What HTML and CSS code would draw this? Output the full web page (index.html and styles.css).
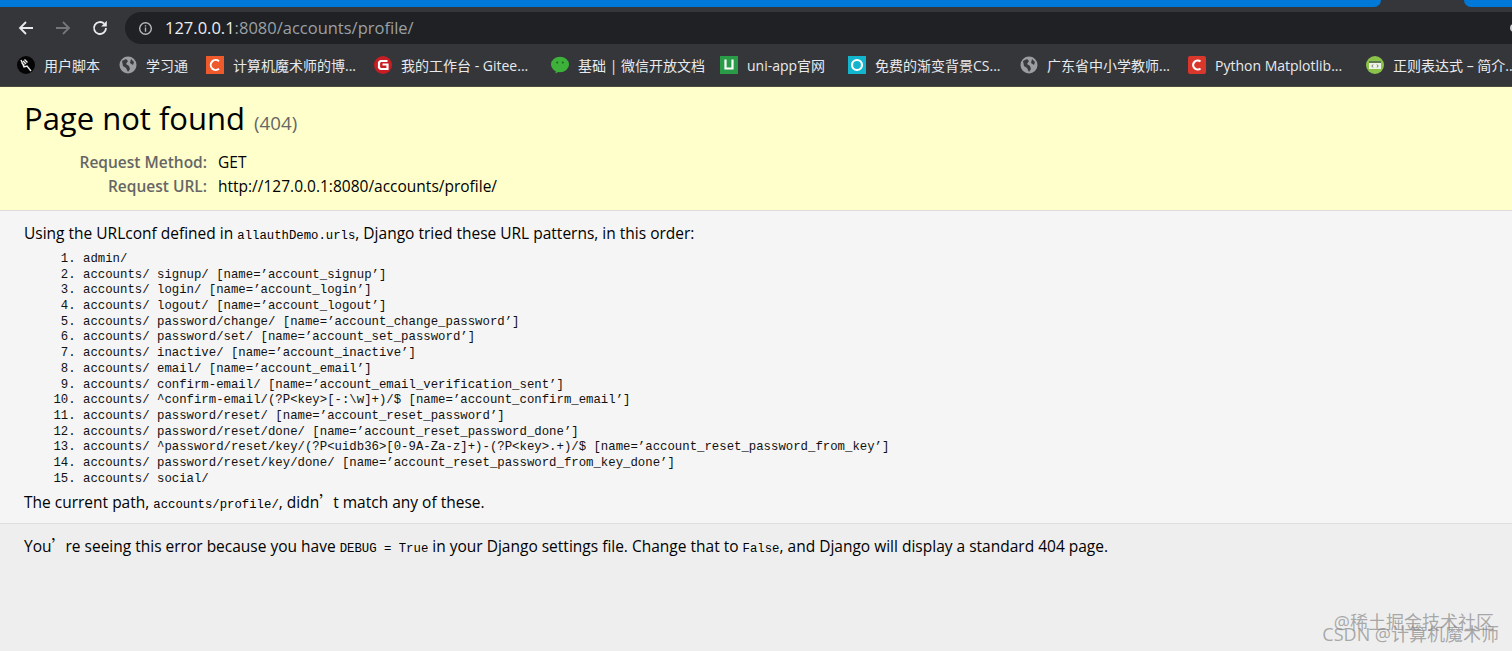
FILE: index.html
```html
<!DOCTYPE html>
<html>
<head>
  <meta charset="UTF-8">
  <title>Page not found at /accounts/profile/</title>
  <link rel="stylesheet" href="styles.css">
</head>
<body>
  <div class="tabstrip">
    <div class="tab-blue tab-left"></div>
    <div class="tab-blue tab-right"></div>
  </div>

  <div class="toolbar">
    <svg class="nav-icon" viewBox="0 0 18 18"><path d="M16 9H3M9 3L3 9l6 6" fill="none" stroke="#e8eaed" stroke-width="1.8"/></svg>
    <svg class="nav-icon" viewBox="0 0 18 18"><path d="M2 9h13M9 3l6 6-6 6" fill="none" stroke="#74767a" stroke-width="1.8"/></svg>
    <svg class="nav-icon" viewBox="0 0 18 18"><path d="M15 9a6 6 0 1 1-1.8-4.3" fill="none" stroke="#e8eaed" stroke-width="1.8"/><path d="M15.8 1.8v5.6h-5.6z" fill="#e8eaed"/></svg>
    <div class="omnibox">
      <svg class="info-icon" viewBox="0 0 16 16"><circle cx="8" cy="8" r="6.2" fill="none" stroke="#b5b7ba" stroke-width="1.5"/><path d="M8 7v4.4M8 4.4v1.5" stroke="#b5b7ba" stroke-width="1.5"/></svg>
      <span class="host">127.0.0.1</span><span class="path">:8080/accounts/profile/</span>
      <div class="omni-end"></div>
    </div>
  </div>

  <div class="bookmarks">
    <div class="bm bm-1">
      <svg class="fav" viewBox="0 0 18 18"><circle cx="9" cy="9" r="9" fill="#050505"/><path d="M4.500 6.500l3 3M6 5l3 3M7.500 3.500l3 3M4 4l3 7 3-1 4 5" stroke="#eee" stroke-width="1.400" fill="none"/></svg>
      <span>用户脚本</span>
    </div>
    <div class="bm bm-2">
      <svg class="fav" viewBox="0 0 18 18"><circle cx="9" cy="9" r="8.500" fill="#9b9da0"/><path d="M3 5l4-2 2 2-2 3 3 2 1 3-2 3-2-4-3-2zM12 3l3 3-1 3-3-2z" fill="#3a3b3f"/></svg>
      <span>学习通</span>
    </div>
    <div class="bm bm-3">
      <svg class="fav" viewBox="0 0 18 18"><rect width="18" height="18" fill="#ef5a2c"/><path d="M13 5.200A5 5 0 1 0 13 12.800" fill="none" stroke="#fff" stroke-width="2"/></svg>
      <span>计算机魔术师的博...</span>
    </div>
    <div class="bm bm-4">
      <svg class="fav" viewBox="0 0 18 18"><circle cx="9" cy="9" r="9" fill="#c71d23"/><path d="M13.500 5H6.500L5 6.500v5L6.500 13h7V8.500H8.500" fill="none" stroke="#fff" stroke-width="2.200"/></svg>
      <span>我的工作台 - Gitee...</span>
    </div>
    <div class="bm bm-5">
      <svg class="fav" viewBox="0 0 18 18"><ellipse cx="9" cy="8.500" rx="9" ry="7.800" fill="#3eb13a"/><path d="M5 14l-.500 3.500L9 15z" fill="#3eb13a"/><circle cx="6.200" cy="6.500" r="1" fill="#16641a"/><circle cx="11.800" cy="6.500" r="1" fill="#16641a"/></svg>
      <span>基础 | 微信开放文档</span>
    </div>
    <div class="bm bm-6">
      <svg class="fav" viewBox="0 0 18 18"><rect width="18" height="18" fill="#2a9c48"/><path d="M5.500 3.500v9h7v-9" fill="none" stroke="#fff" stroke-width="2.200"/></svg>
      <span>uni-app官网</span>
    </div>
    <div class="bm bm-7">
      <svg class="fav" viewBox="0 0 18 18"><rect width="18" height="18" fill="#12b5cb"/><circle cx="9" cy="9" r="5" fill="none" stroke="#fff" stroke-width="2.200"/></svg>
      <span>免费的渐变背景CS...</span>
    </div>
    <div class="bm bm-8">
      <svg class="fav" viewBox="0 0 18 18"><circle cx="9" cy="9" r="8.500" fill="#9b9da0"/><path d="M3 5l4-2 2 2-2 3 3 2 1 3-2 3-2-4-3-2zM12 3l3 3-1 3-3-2z" fill="#3a3b3f"/></svg>
      <span>广东省中小学教师...</span>
    </div>
    <div class="bm bm-9">
      <svg class="fav" viewBox="0 0 18 18"><rect width="18" height="18" rx="2" fill="#d9372c"/><path d="M12.500 5.500A4.500 4.500 0 1 0 12.500 12.500" fill="none" stroke="#fff" stroke-width="2.200"/></svg>
      <span>Python Matplotlib...</span>
    </div>
    <div class="bm bm-10">
      <svg class="fav" viewBox="0 0 18 18"><circle cx="9" cy="9" r="9" fill="#8bc34a"/><rect x="3" y="5" width="12" height="8" fill="#eef3e6"/><rect x="3" y="5" width="12" height="2" fill="#5d7a52"/><path d="M7 8.500L5.800 10 7 11.500M11 8.500l1.200 1.500-1.200 1.500" fill="none" stroke="#456" stroke-width=".8"/></svg>
      <span>正则表达式 – 简介...</span>
    </div>
  </div>

  <div class="summary">
    <h1>Page not found <span class="status">(404)</span></h1>
    <table class="meta">
      <tr><th>Request Method:</th><td>GET</td></tr>
      <tr><th>Request URL:</th><td>http://127.0.0.1:8080/accounts/profile/</td></tr>
    </table>
  </div>

  <div class="info">
    <p class="intro">Using the URLconf defined in <code>allauthDemo.urls</code>, Django tried these URL patterns, in this order:</p>
    <ol class="patterns">
      <li>admin/</li>
      <li>accounts/ signup/ [name=’account_signup’]</li>
      <li>accounts/ login/ [name=’account_login’]</li>
      <li>accounts/ logout/ [name=’account_logout’]</li>
      <li>accounts/ password/change/ [name=’account_change_password’]</li>
      <li>accounts/ password/set/ [name=’account_set_password’]</li>
      <li>accounts/ inactive/ [name=’account_inactive’]</li>
      <li>accounts/ email/ [name=’account_email’]</li>
      <li>accounts/ confirm-email/ [name=’account_email_verification_sent’]</li>
      <li>accounts/ ^confirm-email/(?P&lt;key&gt;[-:\w]+)/$ [name=’account_confirm_email’]</li>
      <li>accounts/ password/reset/ [name=’account_reset_password’]</li>
      <li>accounts/ password/reset/done/ [name=’account_reset_password_done’]</li>
      <li>accounts/ ^password/reset/key/(?P&lt;uidb36&gt;[0-9A-Za-z]+)-(?P&lt;key&gt;.+)/$ [name=’account_reset_password_from_key’]</li>
      <li>accounts/ password/reset/key/done/ [name=’account_reset_password_from_key_done’]</li>
      <li>accounts/ social/</li>
    </ol>
    <p class="current">The current path, <code>accounts/profile/</code>, didn<span class="wide-quote">’</span>t match any of these.</p>
  </div>

  <div class="explanation">
    <p>You<span class="wide-quote">’</span>re seeing this error because you have <code>DEBUG = True</code> in your Django settings file. Change that to <code>False</code>, and Django will display a standard 404 page.</p>
  </div>

  <div class="watermark">
    <div class="wm-1">@稀土掘金技术社区</div>
    <div class="wm-2">CSDN @计算机魔术师</div>
  </div>
</body>
</html>
```

FILE: styles.css
```css
html, body {
  margin: 0;
  padding: 0;
}

body {
  position: relative;
  height: 651px;
  overflow: hidden;
  font-family: "Open Sans", "Noto Sans CJK SC", sans-serif;
  font-size: 15px;
  color: #000;
  background: #eee;
}

/* Browser chrome */
.tabstrip {
  display: flex;
  justify-content: space-between;
  height: 7px;
  background: #35363a;
}

.tab-blue {
  height: 7px;
  background: #0078d7;
}

.tab-left {
  width: 1381px;
  border-bottom-right-radius: 7px;
}

.tab-right {
  width: 48px;
  border-bottom-left-radius: 7px;
}

.toolbar {
  display: flex;
  align-items: center;
  height: 37px;
  padding-left: 17px;
  background: #35363a;
}

.nav-icon {
  width: 18px;
  height: 18px;
  margin-right: 19px;
  margin-top: 5px;
}

.omnibox {
  display: flex;
  align-items: center;
  flex: 1;
  height: 32px;
  margin-top: 5px;
  margin-left: -3px;
  padding: 0 0 2px 13px;
  box-sizing: border-box;
  border-radius: 16px 0 0 16px;
  background: #202124;
  font-size: 16.500px;
  overflow: hidden;
}

.info-icon {
  width: 15px;
  height: 15px;
  margin: 2px 12px 0 0;
}

.host {
  color: #eceef0;
}

.path {
  color: #9aa0a6;
}

/* Edge of the icon that the crop cuts off */
.omni-end {
  flex: none;
  width: 8px;
  height: 8px;
  margin: 2px -6px 0 auto;
  border-radius: 50%;
  background: #c8cacc;
}

.bookmarks {
  display: flex;
  align-items: center;
  height: 42px;
  padding-left: 17px;
  background: #35363a;
  border-bottom: 1px solid #4a4a40;
  font-size: 14px;
  color: #e8eaed;
  white-space: nowrap;
  overflow: hidden;
}

.bm {
  display: flex;
  align-items: center;
  gap: 9px;
  flex: none;
}

.fav {
  width: 18px;
  height: 18px;
  flex: none;
}

.bm-1 { width: 102px; }
.bm-2 { width: 87px; }
.bm-3 { width: 168px; }
.bm-4 { width: 177px; }
.bm-5 { width: 169px; }
.bm-6 { width: 128px; }
.bm-7 { width: 172px; }
.bm-8 { width: 168px; }
.bm-9 { width: 178px; }

/* Django 404 page */
.summary {
  height: 124px;
  padding: 12px 24px 0;
  box-sizing: border-box;
  background: #ffc;
  border-bottom: 1px solid #ddd;
}

h1 {
  margin: 0 0 8px;
  font-size: 31px;
  line-height: 38px;
  font-weight: normal;
}

.status {
  margin-left: 1px;
  font-size: 18.700px;
  color: #666;
}

.meta {
  border-collapse: collapse;
  border: none;
  font-size: 15.500px;
  line-height: 24px;
}

.meta th {
  width: 183px;
  padding: 0 11px 0 0;
  text-align: right;
  font-weight: 600;
  color: #666;
}

.meta td {
  padding: 0;
}

.info {
  height: 313px;
  padding: 12px 24px 0;
  box-sizing: border-box;
  background: #f5f5f5;
  border-bottom: 1px solid #ddd;
}

code {
  font-family: "Liberation Mono", "Noto Sans CJK SC", monospace;
  font-size: 12.300px;
}

.intro, .current, .explanation p {
  margin: 0;
  font-size: 15.500px;
  line-height: 20px;
}

.patterns {
  margin: 6px 0 4px;
  padding-left: 59px;
  font-family: "Liberation Mono", monospace;
  font-size: 12.330px;
  line-height: 15.680px;
  color: #111;
}

.wide-quote {
  display: inline-block;
  width: 14px;
  font-family: "Noto Sans CJK SC", sans-serif;
}

.explanation {
  padding: 11px 24px 0;
}

/* Site watermarks */
.watermark {
  position: absolute;
  right: 13px;
  bottom: 7px;
  text-align: right;
  font-size: 18px;
  line-height: 20px;
  color: rgba(120, 120, 120, 0.6);
}

.wm-1 {
  margin-right: 5px;
  margin-bottom: -8px;
}
```
